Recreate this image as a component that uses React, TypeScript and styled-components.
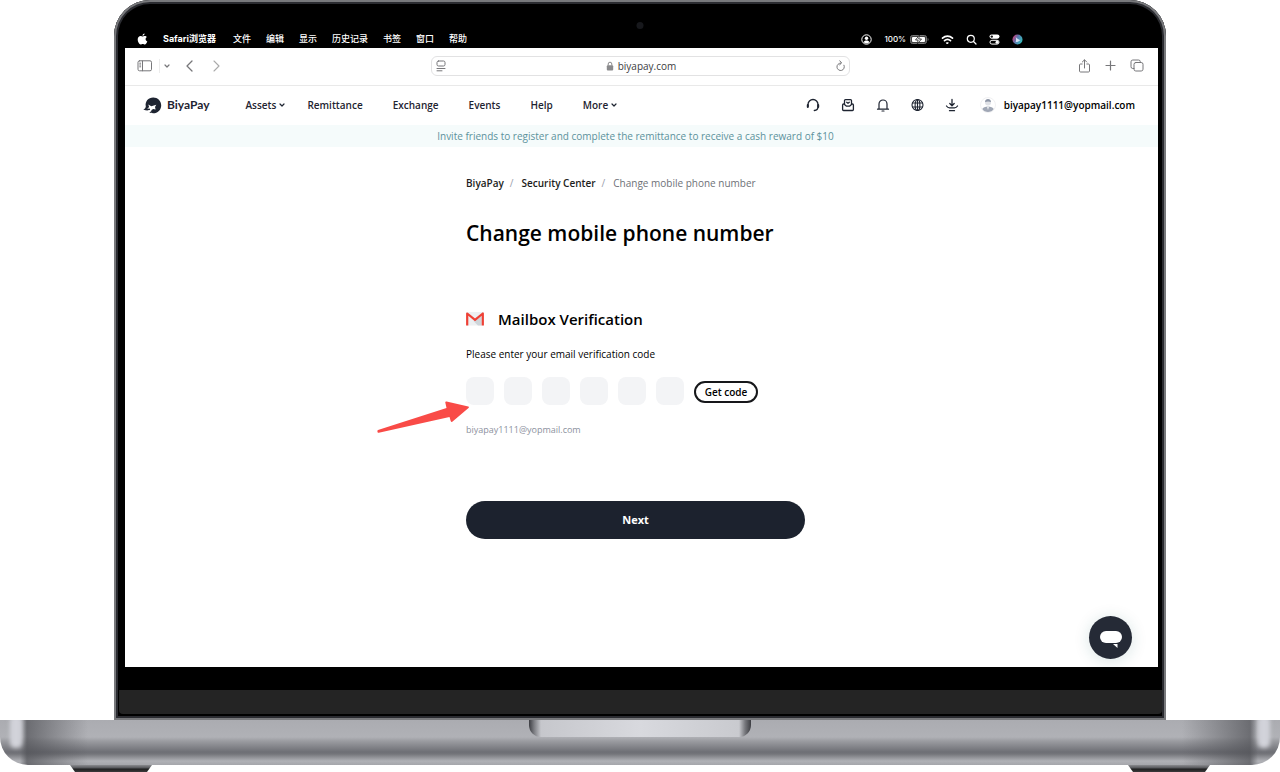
import React from "react";
import styled, { createGlobalStyle, css } from "styled-components";

const GlobalStyle = createGlobalStyle`
  *, *::before, *::after { box-sizing: border-box; }
  body {
    margin: 0;
    background: #fff;
    color: #000;
    font-family: "Open Sans", "Noto Sans", "Noto Sans CJK SC", sans-serif;
    font-size: 10px;
    line-height: 16px;
  }
  h1, h2, p, ol { margin: 0; padding: 0; }
  a { color: inherit; text-decoration: none; }
  button { font: inherit; color: inherit; background: none; border: 0; padding: 0; cursor: pointer; }
  svg { display: block; flex: none; }
`;

/* Laptop */

const Laptop = styled.div`
  position: relative;
  display: flex;
  flex-direction: column;
`;

const Lid = styled.div`
  position: relative;
  margin: 0 114px;
  padding: 28px 8px 6px 11px;
  background: #000;
  border-radius: 36px 36px 0 0;
  box-shadow: inset 0 0 0 2px #78797c, inset 0 0 0 4px #2b2c31;
`;

const Camera = styled.span`
  position: absolute;
  top: 22px;
  left: 50%;
  width: 7px;
  height: 7px;
  transform: translateX(-50%);
  border-radius: 50%;
  background: #17181c;
`;

const Screen = styled.div`
  position: relative;
  background: #fff;
`;

const Chin = styled.div`
  height: 24px;
  margin: 23px -4px 0 -6px;
  border-radius: 0 0 4px 4px;
  background: #242424;
`;

const Base = styled.div`
  height: 45px;
  display: flex;
  justify-content: center;
  position: relative;
  overflow: hidden;
  border-radius: 0 0 28px 28px;
  background:
    linear-gradient(90deg, rgba(80, 81, 86, 0) 0, rgba(80, 81, 86, 0) 20px, rgba(80, 81, 86, 0.7) 27px, rgba(80, 81, 86, 0) 88px, rgba(80, 81, 86, 0) calc(100% - 98px), rgba(80, 81, 86, 0.7) calc(100% - 30px), rgba(80, 81, 86, 0) calc(100% - 22px)),
    linear-gradient(180deg, #abacb1 0, #b0b1b6 17px, #9b9ca1 21px, #6e6f75 32px, #74757a 34px, #96979c 38px, #b0b1b6 41px, #a5a6ab 45px);
`;

const Glint = styled.span<{ $side: "left" | "right" }>`
  position: absolute;
  top: -4px;
  ${(p) => p.$side}: 10px;
  width: 12px;
  height: 32px;
  border-radius: 5px;
  background: #d2d3da;
  filter: blur(2px);
`;

const Notch = styled.div`
  width: 222px;
  height: 17px;
  border-radius: 0 0 12px 12px;
  background: linear-gradient(90deg, #3c3d42 0, #7b7c81 5px, #c6c7cc 12px, #d8d9de 50%, #c9cacf calc(100% - 12px), #77787d calc(100% - 6px), #3c3d42 100%);
`;

const Feet = styled.div`
  display: flex;
  justify-content: space-between;
  padding: 0 70px;
`;

const Foot = styled.span`
  width: 82px;
  height: 7px;
  clip-path: polygon(0 0, 100% 0, calc(100% - 5px) 100%, 5px 100%);
  background: linear-gradient(180deg, #8a8b8f 0, #55565a 3px, #1f1f20 4px, #3b3b3c 7px);
`;

/* System menu bar */

const MenuBar = styled.div`
  display: flex;
  align-items: center;
  justify-content: space-between;
  height: 20px;
  padding: 2px 135px 0 12px;
  color: #fff;
  background: #000;
  font-family: Inter, "Noto Sans CJK SC", sans-serif;
  font-size: 9px;
  font-weight: 500;
`;

const MenuItems = styled.nav`
  display: flex;
  align-items: center;
  gap: 15px;
`;

const MenuItem = styled.a<{ $app?: boolean }>`
  font-weight: ${(p) => (p.$app ? 700 : 500)};
  ${(p) => p.$app && css`margin-right: 2px;`}
`;

const StatusItems = styled.div`
  display: flex;
  align-items: center;
  gap: 12px;
`;

const Battery = styled.span`
  display: flex;
  align-items: center;
  gap: 4px;
  font-size: 8px;
`;

/* Browser toolbar */

const Toolbar = styled.div`
  display: grid;
  grid-template-columns: 1fr minmax(0, 419px) 1fr;
  align-items: center;
  height: 38px;
  padding: 0 14px 2px 12px;
  color: #77777a;
  border-bottom: 1px solid #e9e9e9;
`;

const ToolGroup = styled.div<{ $end?: boolean }>`
  display: flex;
  align-items: center;
  gap: ${(p) => (p.$end ? 14 : 6)}px;
  justify-content: ${(p) => (p.$end ? "flex-end" : "flex-start")};
`;

const Rule = styled.span`
  width: 1px;
  height: 14px;
  margin-right: -2px;
  background: #ececec;
`;

const HistoryButtons = styled.div`
  display: flex;
  gap: 14px;
  margin-left: 8px;
`;

const AddressBar = styled.div`
  display: flex;
  align-items: center;
  justify-content: space-between;
  height: 20px;
  padding: 0 4px;
  border: 1px solid #e2e2e3;
  border-radius: 6px;
`;

const Address = styled.span`
  display: flex;
  align-items: center;
  gap: 4px;
  color: #3c3c3e;
`;

/* Site header */

const Header = styled.header`
  display: flex;
  align-items: center;
  height: 39px;
  padding: 0 23px 1px 18px;
  color: #1e2431;
  font-weight: 600;
`;

const Brand = styled.a`
  display: flex;
  align-items: center;
  gap: 5px;
  font-family: Lato, sans-serif;
  font-size: 12px;
  font-weight: 700;
`;

const SiteNav = styled.nav`
  display: flex;
  gap: 30px;
  margin-left: 36px;
`;

const NavLink = styled.a<{ $menu?: boolean }>`
  display: flex;
  align-items: center;
  gap: 3px;
  ${(p) => p.$menu && css`margin-right: -8px;`}
`;

const Actions = styled.div`
  display: flex;
  align-items: center;
  gap: 21px;
  margin-left: auto;
`;

const Account = styled.a`
  display: flex;
  align-items: center;
  gap: 8px;
  color: #000;
  font-weight: 600;
`;

const Banner = styled.p`
  padding: 3px 12px 3px 0;
  text-align: center;
  color: #5c929b;
  background: #f5fbfb;
`;

/* Page */

const Main = styled.main`
  min-height: 520px;
  padding: 28px 12px 0 0;
`;

const Column = styled.form`
  position: relative;
  width: 339px;
  max-width: 100%;
  margin: 0 auto;
`;

const Crumbs = styled.ol`
  display: flex;
  list-style: none;
  color: #6e7177;
`;

const Crumb = styled.li`
  & + &::before {
    content: "/";
    padding: 0 8px 0 6px;
    color: #9a9eac;
  }
  a { color: #1c1d20; font-weight: 600; }
`;

const Title = styled.h1`
  margin-top: 26px;
  font-size: 21px;
  line-height: 32px;
  font-weight: 600;
`;

const SectionTitle = styled.h2`
  display: flex;
  align-items: center;
  gap: 14px;
  margin-top: 58px;
  font-size: 15px;
  line-height: 24px;
  font-weight: 600;
`;

const Prompt = styled.p`
  margin-top: 15px;
`;

const CodeRow = styled.div`
  display: flex;
  align-items: center;
  gap: 10px;
  margin-top: 15px;
`;

const Digit = styled.input`
  width: 28px;
  height: 28px;
  padding: 0;
  border: 0;
  border-radius: 8px;
  background: #f3f4f6;
  text-align: center;
  font: inherit;
`;

const GetCode = styled.button`
  width: 64px;
  height: 22px;
  margin-top: 2px;
  border: 2px solid #16171a;
  border-radius: 11px;
  font-weight: 600;
  line-height: 18px;
`;

const Email = styled.p`
  margin-top: 17px;
  color: #8c919e;
  font-size: 9px;
`;

const Next = styled.button`
  width: 100%;
  height: 38px;
  margin-top: 63px;
  border-radius: 19px;
  color: #fff;
  background: #1c222e;
  font-size: 11px;
  font-weight: 700;
`;

const Pointer = styled.svg`
  position: absolute;
  left: -89px;
  top: 226px;
`;

const Chat = styled.button`
  position: absolute;
  right: 26px;
  bottom: 8px;
  width: 43px;
  height: 43px;
  display: grid;
  place-items: center;
  border-radius: 50%;
  background: #252a36;
  box-shadow: 0 2px 16px rgba(20, 90, 90, 0.16);
`;

const Line = ({ w, h, box, sw = 1, children }: { w: number; h: number; box?: string; sw?: number; children: React.ReactNode }) => (
  <svg width={w} height={h} viewBox={box ?? `0 0 ${w} ${h}`} fill="none" stroke="currentColor" strokeWidth={sw} strokeLinecap="round" strokeLinejoin="round" aria-hidden="true">
    {children}
  </svg>
);

const Caret = () => (
  <Line w={6} h={6} sw={1.2}><path d="M1 2l2 2 2-2" /></Line>
);

const menus = ["文件", "编辑", "显示", "历史记录", "书签", "窗口", "帮助"];
const links = [
  { label: "Assets", menu: true },
  { label: "Remittance" },
  { label: "Exchange" },
  { label: "Events" },
  { label: "Help" },
  { label: "More", menu: true },
];

function SystemBar() {
  return (
    <MenuBar>
      <MenuItems aria-label="System">
        <svg width="11" height="12" viewBox="0 0 11 12" fill="#fff" aria-hidden="true">
          <path d="M7.6.4c.1 1-.8 2.3-2.1 2.4C5.400 1.700 6.400.6 7.600.4zM5.600 3.500c.5 0 1.100-.6 2.200-.6.9 0 1.700.5 2.100 1.100-1.900 1.100-1.600 3.700.4 4.500-.5 1.400-1.500 3-2.500 3-.8 0-1.100-.5-2.100-.5s-1.300.5-2 .5C2.300 11.500.7 8.900.7 6.600c0-2.300 1.400-3.600 2.900-3.600.9 0 1.500.5 2 .5z" />
        </svg>
        <MenuItem href="#" $app>Safari浏览器</MenuItem>
        {menus.map((m) => <MenuItem href="#" key={m}>{m}</MenuItem>)}
      </MenuItems>
      <StatusItems>
        <svg width="11" height="11" viewBox="0 0 11 11" aria-hidden="true">
          <circle cx="5.500" cy="5.500" r="4.700" fill="none" stroke="#fff" />
          <circle cx="5.500" cy="4.200" r="1.700" fill="#fff" />
          <path d="M2.500 8.300c.8-2.300 5.200-2.300 6 0-1.500 1.500-4.500 1.500-6 0z" fill="#fff" />
        </svg>
        <Battery>
          100%
          <svg width="19" height="9" viewBox="0 0 19 9" aria-hidden="true">
            <rect x=".5" y=".5" width="16" height="8" rx="2" fill="#444" stroke="#777" />
            <rect x="2" y="2" width="13" height="5" rx="1" fill="#fff" />
            <path d="M9.500 0L5.500 5h2.600l-.8 4 4.200-5H8.700z" fill="#fff" stroke="#222" strokeWidth=".8" />
            <path d="M17.700 3v3c1-.3 1-2.700 0-3z" fill="#888" />
          </svg>
        </Battery>
        <Line w={13} h={11} sw={1.7}>
          <path d="M1.500 4.200c2.900-2.700 7.100-2.700 10 0M3.500 6.600c1.800-1.600 4.200-1.600 6 0" />
          <path d="M5.700 8.800h1.600L6.500 9.700z" fill="currentColor" strokeWidth="1" />
        </Line>
        <Line w={11} h={11} sw={1.2}><circle cx="4.800" cy="4.800" r="3.500" /><path d="M7.500 7.500L10 10" /></Line>
        <svg width="11" height="11" viewBox="0 0 11 11" aria-hidden="true">
          <rect x=".5" y=".5" width="10" height="4.200" rx="2.100" fill="#fff" />
          <circle cx="2.800" cy="2.600" r="1.200" fill="#111" />
          <rect x="1" y="6.300" width="9" height="3.800" rx="1.900" fill="none" stroke="#fff" />
          <circle cx="8" cy="8.200" r="1.500" fill="#fff" />
        </svg>
        <svg width="11" height="11" viewBox="0 0 11 11" aria-hidden="true">
          <defs>
            <linearGradient id="orb" x1="0" y1=".2" x2="1" y2=".7">
              <stop offset="0" stopColor="#d33c77" /><stop offset=".45" stopColor="#5876ad" /><stop offset="1" stopColor="#34c3bd" />
            </linearGradient>
          </defs>
          <circle cx="5.500" cy="5.500" r="5" fill="url(#orb)" />
          <path d="M3.500 8.300c.8-1.500.6-3.500.3-5.300 1.200 1.800 2.800 2.700 4.700 3-1.500 1-3.300 2.300-5 2.300z" fill="#e8eeff" opacity=".85" />
        </svg>
      </StatusItems>
    </MenuBar>
  );
}

function BrowserBar() {
  return (
    <Toolbar>
      <ToolGroup>
        <button type="button" aria-label="Sidebar">
          <Line w={16} h={12}><rect x="1" y=".8" width="13.500" height="10" rx="1.500" /><path d="M5.500 1v9.800M2.700 3.200h1M2.700 5h1M2.700 6.800h1" /></Line>
        </button>
        <Rule />
        <button type="button" aria-label="Tab groups"><Caret /></button>
        <HistoryButtons>
          <button type="button" aria-label="Back"><Line w={12} h={12} sw={1.300}><path d="M8 1L3 6l5 5" /></Line></button>
          <button type="button" aria-label="Forward"><Line w={12} h={12} sw={1.100}><path d="M4 1l5 5-5 5" stroke="#aaa" /></Line></button>
        </HistoryButtons>
      </ToolGroup>
      <AddressBar>
        <Line w={10} h={12}><rect x="1" y="1" width="8" height="5" rx="1.500" /><path d="M1 8.500h8M1 10.800h5" /></Line>
        <Address>
          <svg width="8" height="10" viewBox="0 0 8 10" aria-hidden="true">
            <rect x=".8" y="4.200" width="6.400" height="5.300" rx="1" fill="#8a8a8c" />
            <path d="M2.200 4.500V3a1.800 1.800 0 013.600 0v1.500" fill="none" stroke="#8a8a8c" />
          </svg>
          biyapay.com
        </Address>
        <Line w={9} h={11}><path d="M8 5.200A3.700 3.700 0 114.800 3.100M3.800.8l1.800 2.200-2 1.800" /></Line>
      </AddressBar>
      <ToolGroup $end>
        <button type="button" aria-label="Share"><Line w={13} h={14}><path d="M4.200 5H2.500c-.6 0-1 .4-1 1v6c0 .6.400 1 1 1h8c.6 0 1-.4 1-1V6c0-.6-.4-1-1-1H8.800M6.500 9V1M4.300 3l2.200-2.200L8.700 3" /></Line></button>
        <button type="button" aria-label="New tab"><Line w={11} h={11} sw={1.200}><path d="M5.500 1v9M1 5.500h9" /></Line></button>
        <button type="button" aria-label="Tabs"><Line w={14} h={13}><rect x="4" y="3.500" width="9" height="8.500" rx="1.800" /><path d="M4 9.500H2.800A1.800 1.800 0 011 7.700V2.800A1.800 1.800 0 012.800 1h5.700a1.800 1.800 0 011.800 1.800v.7" /></Line></button>
      </ToolGroup>
    </Toolbar>
  );
}

function SiteHeader() {
  return (
    <Header>
      <Brand href="#">
        <svg width="19" height="17" viewBox="0 0 19 17" aria-hidden="true">
          <path d="M2.800 9.500C1.800 4.600 5.400.6 10.200.6c4.500 0 8 3.500 8 7.800s-3.500 7.900-8 7.900c-1.700 0-3.200-.4-4.200-1.200l.5-1.900c-1.600.4-4 .3-6.200-.6 1.400-.6 2.300-1.600 2.500-3.100z" fill="#1e2431" />
          <path d="M5.300 7.600l3 1.700 5-1.500-1.300 2.100.6 2.700-2.400-.6-2.900 1.700-.6-2.200-2.500.2 1.900-1.700z" fill="#fff" />
          <path d="M4.500 13.600l3.200-.9 1 1-2.200 1.800z" fill="#fff" />
        </svg>
        BiyaPay
      </Brand>
      <SiteNav aria-label="Main">
        {links.map((l) => (
          <NavLink href="#" key={l.label} $menu={l.menu}>{l.label}{l.menu && <Caret />}</NavLink>
        ))}
      </SiteNav>
      <Actions>
        <button type="button" aria-label="Support">
          <Line w={14} h={14} sw={1.300}><path d="M2 8.200V6.500a5 5 0 0110 0v2.200c0 2-1.600 3.600-3.700 3.800" /><path d="M1.800 7v2M12.200 7v2" strokeWidth="2" /></Line>
        </button>
        <button type="button" aria-label="Inbox">
          <Line w={14} h={14} sw={1.300}><path d="M3.500 6V2.600c0-.6.400-1 1-1h5c.6 0 1 .4 1 1V6M3.500 6H2.600c-.5 0-1 .5-1 1v4.500c0 .6.400 1 1 1h8.800c.6 0 1-.4 1-1V7c0-.5-.5-1-1-1h-.9M3.500 6.500L5.500 8.200h3l2-1.700M5.700 4.300L7 5.300l1.300-1" /></Line>
        </button>
        <button type="button" aria-label="Notifications">
          <Line w={14} h={14} sw={1.200}><path d="M1.500 11.200h11M3 11V6a4 4 0 018 0v5M6 13h2" /></Line>
        </button>
        <button type="button" aria-label="Language">
          <Line w={13} h={14} sw={1.100}><circle cx="6.500" cy="7" r="5.500" /><ellipse cx="6.500" cy="7" rx="2.400" ry="5.500" /><path d="M6.500 1.500v11M1.500 5h10M1.500 9h10" /></Line>
        </button>
        <button type="button" aria-label="Download">
          <Line w={14} h={14} sw={1.300}><path d="M7 1.500v6M4.800 5.500L7 7.700l2.200-2.200M1.500 8c.8 1.200 1.500 1.800 3 1.800h5c1.500 0 2.200-.6 3-1.800M4.500 12.700h5" /></Line>
        </button>
        <Account href="#">
          <svg width="16" height="16" viewBox="0 0 16 16" aria-hidden="true">
            <circle cx="8" cy="8" r="7.500" fill="#fff" stroke="#f1f1f3" />
            <circle cx="8" cy="5.400" r="3" fill="#dfe1e6" />
            <path d="M5 5c0-4 6-4 6 0-1.500-.8-4.500-.8-6 0z" fill="#8e96a6" />
            <path d="M2.300 12c1-3.500 10.400-3.500 11.400 0-2 4-9.400 4-11.400 0z" fill="#a0a7b5" />
            <path d="M6.800 9.500h2.400L8 13z" fill="#e8eaee" />
          </svg>
          biyapay1111@yopmail.com
        </Account>
      </Actions>
    </Header>
  );
}

export default function App() {
  return (
    <>
      <GlobalStyle />
      <Laptop>
        <Lid>
          <Camera />
          <SystemBar />
          <Screen>
            <BrowserBar />
            <SiteHeader />
            <Banner>Invite friends to register and complete the remittance to receive a cash reward of $10</Banner>
            <Main>
              <Column onSubmit={(e: React.FormEvent) => e.preventDefault()}>
                <Crumbs>
                  <Crumb><a href="#">BiyaPay</a></Crumb>
                  <Crumb><a href="#">Security Center</a></Crumb>
                  <Crumb>Change mobile phone number</Crumb>
                </Crumbs>
                <Title>Change mobile phone number</Title>
                <SectionTitle>
                  <svg width="18" height="14" viewBox="0 0 18 14" aria-hidden="true">
                    <rect width="18" height="13.500" rx="1" fill="#edf0f2" />
                    <path d="M9 8.500l6.500-5v10H12L7.500 9z" fill="#cfd5d9" />
                    <path d="M1.200 13.500V1.500L9 7.800l7.800-6.300v12" fill="none" stroke="#ef4035" strokeWidth="2.200" strokeLinejoin="round" />
                  </svg>
                  Mailbox Verification
                </SectionTitle>
                <Prompt id="prompt">Please enter your email verification code</Prompt>
                <CodeRow role="group" aria-labelledby="prompt">
                  {[1, 2, 3, 4, 5, 6].map((n) => (
                    <Digit key={n} type="text" inputMode="numeric" maxLength={1} aria-label={`Digit ${n}`} />
                  ))}
                  <GetCode type="button">Get code</GetCode>
                </CodeRow>
                <Email>biyapay1111@yopmail.com</Email>
                <Next type="submit">Next</Next>
                <Pointer width="92" height="34" viewBox="0 0 92 34" aria-hidden="true">
                  <path d="M1 29L69.500 7l-1.200-5.500c-.1-.8.700-1.200 1.300-1L91.300 5.500c.7.3.8 1.100.2 1.600L75.600 20.600c-.8.600-1.700.2-1.900-.6L72.500 16 1.800 31.800c-1.300.2-2-2.200-.8-2.800z" fill="#f94b47" />
                </Pointer>
              </Column>
            </Main>
            <Chat type="button" aria-label="Chat">
              <svg width="24" height="20" viewBox="0 0 24 20" aria-hidden="true">
                <rect x="1" y="3" width="22" height="12" rx="6" fill="#fff" />
                <path d="M14 16h4.500v4z" fill="#fff" />
              </svg>
            </Chat>
          </Screen>
          <Chin />
        </Lid>
        <Base>
          <Glint $side="left" />
          <Notch />
          <Glint $side="right" />
        </Base>
        <Feet><Foot /><Foot /></Feet>
      </Laptop>
    </>
  );
}
